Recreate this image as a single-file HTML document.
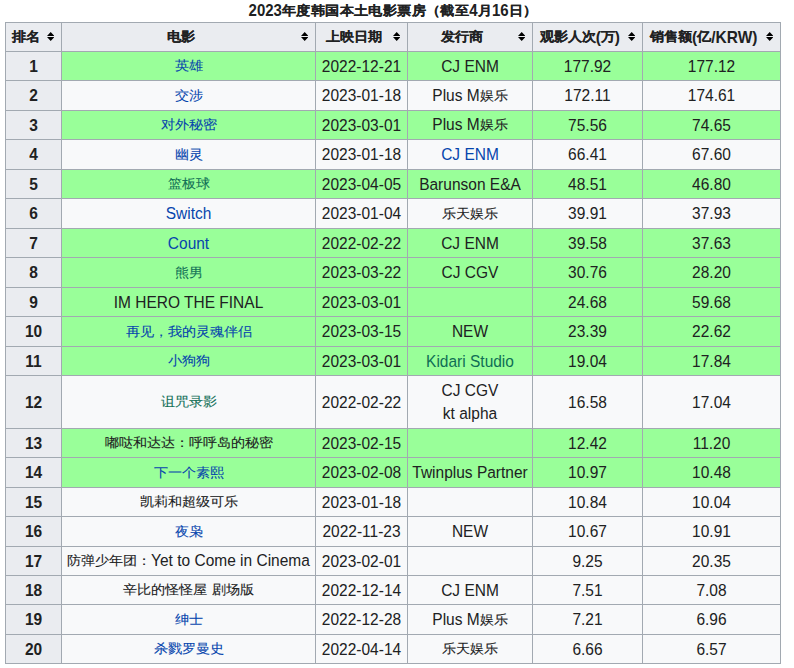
<!DOCTYPE html><html><head><meta charset="utf-8"><style>
html,body{margin:0;padding:0;background:#fff;width:794px;height:668px;overflow:hidden;}
body{position:relative;font-family:"Liberation Sans",sans-serif;font-size:15.5px;color:#202122;}
.c{position:absolute;box-sizing:border-box;border:1px solid #a2a9b1;display:flex;align-items:center;justify-content:center;text-align:center;line-height:23px;white-space:nowrap;padding-bottom:2px;}
.h{background:#eaecf0;font-weight:bold;}
.w{background:#f8f9fa;}
.g{background:#99ff99;}
.t{position:absolute;left:-4px;width:794px;top:0;height:22px;text-align:center;font-weight:bold;line-height:19px;font-size:15px;}
.t .z{font-size:14px;letter-spacing:0.4px;}
.s{position:absolute;width:7.4px;height:9px;}
.z{font-size:14px;display:inline-block;transform:scaleY(0.92);-webkit-text-stroke:0.1px currentColor;}
.l{display:inline-block;transform:scaleY(1.1);}
</style></head><body>
<div class="t"><span class="l">2023</span><span class="z">年度韩国本土电影票房（截至</span><span class="l">4</span><span class="z">月</span><span class="l">16</span><span class="z">日）</span></div>
<div class="c h" style="left:5px;top:22px;width:57px;height:30px;padding:0 21px 2px 5.6px;"><span class="z">排名</span><svg class="s" style="right:6.8px;top:9px" preserveAspectRatio="none" viewBox="0 0 8 9"><path d="M4 0L8 4H0Z M0 5H8L4 9Z" fill="#000"/></svg></div>
<div class="c h" style="left:61px;top:22px;width:255px;height:30px;padding:0 21px 2px 5.6px;"><span class="z">电影</span><svg class="s" style="right:6.8px;top:9px" preserveAspectRatio="none" viewBox="0 0 8 9"><path d="M4 0L8 4H0Z M0 5H8L4 9Z" fill="#000"/></svg></div>
<div class="c h" style="left:315px;top:22px;width:93px;height:30px;padding:0 21px 2px 5.6px;"><span class="z">上映日期</span><svg class="s" style="right:6.8px;top:9px" preserveAspectRatio="none" viewBox="0 0 8 9"><path d="M4 0L8 4H0Z M0 5H8L4 9Z" fill="#000"/></svg></div>
<div class="c h" style="left:407px;top:22px;width:126px;height:30px;padding:0 21px 2px 5.6px;"><span class="z">发行商</span><svg class="s" style="right:6.8px;top:9px" preserveAspectRatio="none" viewBox="0 0 8 9"><path d="M4 0L8 4H0Z M0 5H8L4 9Z" fill="#000"/></svg></div>
<div class="c h" style="left:532px;top:22px;width:111px;height:30px;padding:0 21px 2px 5.6px;"><span class="z">观影人次</span><span class="l">(</span><span class="z">万</span><span class="l">)</span><svg class="s" style="right:6.8px;top:9px" preserveAspectRatio="none" viewBox="0 0 8 9"><path d="M4 0L8 4H0Z M0 5H8L4 9Z" fill="#000"/></svg></div>
<div class="c h" style="left:642px;top:22px;width:139px;height:30px;padding:0 21px 2px 5.6px;"><span class="z">销售额</span><span class="l">(</span><span class="z">亿</span><span class="l">/KRW)</span><svg class="s" style="right:6.8px;top:9px" preserveAspectRatio="none" viewBox="0 0 8 9"><path d="M4 0L8 4H0Z M0 5H8L4 9Z" fill="#000"/></svg></div>
<div class="c h" style="left:5px;top:51px;width:57px;height:30px;"><span class="l">1</span></div>
<div class="c g" style="left:61px;top:51px;width:255px;height:30px;"><span style="color:#0645ad"><span class="z">英雄</span></span></div>
<div class="c g" style="left:315px;top:51px;width:93px;height:30px;"><span class="l">2022-12-21</span></div>
<div class="c g" style="left:407px;top:51px;width:126px;height:30px;"><span style="color:#202122"><span class="l">CJ ENM</span></span></div>
<div class="c g" style="left:532px;top:51px;width:111px;height:30px;"><span class="l">177.92</span></div>
<div class="c g" style="left:642px;top:51px;width:139px;height:30px;"><span class="l">177.12</span></div>
<div class="c h" style="left:5px;top:80px;width:57px;height:31px;"><span class="l">2</span></div>
<div class="c w" style="left:61px;top:80px;width:255px;height:31px;"><span style="color:#0645ad"><span class="z">交涉</span></span></div>
<div class="c w" style="left:315px;top:80px;width:93px;height:31px;"><span class="l">2023-01-18</span></div>
<div class="c w" style="left:407px;top:80px;width:126px;height:31px;"><span style="color:#202122"><span class="l">Plus M</span><span class="z">娱乐</span></span></div>
<div class="c w" style="left:532px;top:80px;width:111px;height:31px;"><span class="l">172.11</span></div>
<div class="c w" style="left:642px;top:80px;width:139px;height:31px;"><span class="l">174.61</span></div>
<div class="c h" style="left:5px;top:110px;width:57px;height:30px;"><span class="l">3</span></div>
<div class="c g" style="left:61px;top:110px;width:255px;height:30px;"><span style="color:#0645ad"><span class="z">对外秘密</span></span></div>
<div class="c g" style="left:315px;top:110px;width:93px;height:30px;"><span class="l">2023-03-01</span></div>
<div class="c g" style="left:407px;top:110px;width:126px;height:30px;"><span style="color:#202122"><span class="l">Plus M</span><span class="z">娱乐</span></span></div>
<div class="c g" style="left:532px;top:110px;width:111px;height:30px;"><span class="l">75.56</span></div>
<div class="c g" style="left:642px;top:110px;width:139px;height:30px;"><span class="l">74.65</span></div>
<div class="c h" style="left:5px;top:139px;width:57px;height:31px;"><span class="l">4</span></div>
<div class="c w" style="left:61px;top:139px;width:255px;height:31px;"><span style="color:#0645ad"><span class="z">幽灵</span></span></div>
<div class="c w" style="left:315px;top:139px;width:93px;height:31px;"><span class="l">2023-01-18</span></div>
<div class="c w" style="left:407px;top:139px;width:126px;height:31px;"><span style="color:#0645ad"><span class="l">CJ ENM</span></span></div>
<div class="c w" style="left:532px;top:139px;width:111px;height:31px;"><span class="l">66.41</span></div>
<div class="c w" style="left:642px;top:139px;width:139px;height:31px;"><span class="l">67.60</span></div>
<div class="c h" style="left:5px;top:169px;width:57px;height:30px;"><span class="l">5</span></div>
<div class="c g" style="left:61px;top:169px;width:255px;height:30px;"><span style="color:#0f6e55"><span class="z">篮板球</span></span></div>
<div class="c g" style="left:315px;top:169px;width:93px;height:30px;"><span class="l">2023-04-05</span></div>
<div class="c g" style="left:407px;top:169px;width:126px;height:30px;"><span style="color:#202122"><span class="l">Barunson E&amp;A</span></span></div>
<div class="c g" style="left:532px;top:169px;width:111px;height:30px;"><span class="l">48.51</span></div>
<div class="c g" style="left:642px;top:169px;width:139px;height:30px;"><span class="l">46.80</span></div>
<div class="c h" style="left:5px;top:198px;width:57px;height:31px;"><span class="l">6</span></div>
<div class="c w" style="left:61px;top:198px;width:255px;height:31px;"><span style="color:#0645ad"><span class="l">Switch</span></span></div>
<div class="c w" style="left:315px;top:198px;width:93px;height:31px;"><span class="l">2023-01-04</span></div>
<div class="c w" style="left:407px;top:198px;width:126px;height:31px;"><span style="color:#202122"><span class="z">乐天娱乐</span></span></div>
<div class="c w" style="left:532px;top:198px;width:111px;height:31px;"><span class="l">39.91</span></div>
<div class="c w" style="left:642px;top:198px;width:139px;height:31px;"><span class="l">37.93</span></div>
<div class="c h" style="left:5px;top:228px;width:57px;height:30px;"><span class="l">7</span></div>
<div class="c g" style="left:61px;top:228px;width:255px;height:30px;"><span style="color:#0645ad"><span class="l">Count</span></span></div>
<div class="c g" style="left:315px;top:228px;width:93px;height:30px;"><span class="l">2022-02-22</span></div>
<div class="c g" style="left:407px;top:228px;width:126px;height:30px;"><span style="color:#202122"><span class="l">CJ ENM</span></span></div>
<div class="c g" style="left:532px;top:228px;width:111px;height:30px;"><span class="l">39.58</span></div>
<div class="c g" style="left:642px;top:228px;width:139px;height:30px;"><span class="l">37.63</span></div>
<div class="c h" style="left:5px;top:257px;width:57px;height:31px;"><span class="l">8</span></div>
<div class="c g" style="left:61px;top:257px;width:255px;height:31px;"><span style="color:#0f6e55"><span class="z">熊男</span></span></div>
<div class="c g" style="left:315px;top:257px;width:93px;height:31px;"><span class="l">2023-03-22</span></div>
<div class="c g" style="left:407px;top:257px;width:126px;height:31px;"><span style="color:#202122"><span class="l">CJ CGV</span></span></div>
<div class="c g" style="left:532px;top:257px;width:111px;height:31px;"><span class="l">30.76</span></div>
<div class="c g" style="left:642px;top:257px;width:139px;height:31px;"><span class="l">28.20</span></div>
<div class="c h" style="left:5px;top:287px;width:57px;height:30px;"><span class="l">9</span></div>
<div class="c g" style="left:61px;top:287px;width:255px;height:30px;"><span style="color:#202122"><span class="l">IM HERO THE FINAL</span></span></div>
<div class="c g" style="left:315px;top:287px;width:93px;height:30px;"><span class="l">2023-03-01</span></div>
<div class="c g" style="left:407px;top:287px;width:126px;height:30px;"><span style="color:#202122"></span></div>
<div class="c g" style="left:532px;top:287px;width:111px;height:30px;"><span class="l">24.68</span></div>
<div class="c g" style="left:642px;top:287px;width:139px;height:30px;"><span class="l">59.68</span></div>
<div class="c h" style="left:5px;top:316px;width:57px;height:31px;"><span class="l">10</span></div>
<div class="c g" style="left:61px;top:316px;width:255px;height:31px;"><span style="color:#0645ad"><span class="z">再见，我的灵魂伴侣</span></span></div>
<div class="c g" style="left:315px;top:316px;width:93px;height:31px;"><span class="l">2023-03-15</span></div>
<div class="c g" style="left:407px;top:316px;width:126px;height:31px;"><span style="color:#202122"><span class="l">NEW</span></span></div>
<div class="c g" style="left:532px;top:316px;width:111px;height:31px;"><span class="l">23.39</span></div>
<div class="c g" style="left:642px;top:316px;width:139px;height:31px;"><span class="l">22.62</span></div>
<div class="c h" style="left:5px;top:346px;width:57px;height:30px;"><span class="l">11</span></div>
<div class="c g" style="left:61px;top:346px;width:255px;height:30px;"><span style="color:#0645ad"><span class="z">小狗狗</span></span></div>
<div class="c g" style="left:315px;top:346px;width:93px;height:30px;"><span class="l">2023-03-01</span></div>
<div class="c g" style="left:407px;top:346px;width:126px;height:30px;"><span style="color:#0f6e55"><span class="l">Kidari Studio</span></span></div>
<div class="c g" style="left:532px;top:346px;width:111px;height:30px;"><span class="l">19.04</span></div>
<div class="c g" style="left:642px;top:346px;width:139px;height:30px;"><span class="l">17.84</span></div>
<div class="c h" style="left:5px;top:375px;width:57px;height:54px;"><span class="l">12</span></div>
<div class="c w" style="left:61px;top:375px;width:255px;height:54px;"><span style="color:#0f6e55"><span class="z">诅咒录影</span></span></div>
<div class="c w" style="left:315px;top:375px;width:93px;height:54px;"><span class="l">2022-02-22</span></div>
<div class="c w" style="left:407px;top:375px;width:126px;height:54px;"><span style="color:#202122"><span class="l">CJ CGV</span><br><span class="l">kt alpha</span></span></div>
<div class="c w" style="left:532px;top:375px;width:111px;height:54px;"><span class="l">16.58</span></div>
<div class="c w" style="left:642px;top:375px;width:139px;height:54px;"><span class="l">17.04</span></div>
<div class="c h" style="left:5px;top:428px;width:57px;height:30px;"><span class="l">13</span></div>
<div class="c g" style="left:61px;top:428px;width:255px;height:30px;"><span style="color:#202122"><span class="z">嘟哒和达达：呼呼岛的秘密</span></span></div>
<div class="c g" style="left:315px;top:428px;width:93px;height:30px;"><span class="l">2023-02-15</span></div>
<div class="c g" style="left:407px;top:428px;width:126px;height:30px;"><span style="color:#202122"></span></div>
<div class="c g" style="left:532px;top:428px;width:111px;height:30px;"><span class="l">12.42</span></div>
<div class="c g" style="left:642px;top:428px;width:139px;height:30px;"><span class="l">11.20</span></div>
<div class="c h" style="left:5px;top:457px;width:57px;height:31px;"><span class="l">14</span></div>
<div class="c g" style="left:61px;top:457px;width:255px;height:31px;"><span style="color:#0645ad"><span class="z">下一个素熙</span></span></div>
<div class="c g" style="left:315px;top:457px;width:93px;height:31px;"><span class="l">2023-02-08</span></div>
<div class="c g" style="left:407px;top:457px;width:126px;height:31px;"><span style="color:#202122"><span class="l">Twinplus Partner</span></span></div>
<div class="c g" style="left:532px;top:457px;width:111px;height:31px;"><span class="l">10.97</span></div>
<div class="c g" style="left:642px;top:457px;width:139px;height:31px;"><span class="l">10.48</span></div>
<div class="c h" style="left:5px;top:487px;width:57px;height:30px;"><span class="l">15</span></div>
<div class="c w" style="left:61px;top:487px;width:255px;height:30px;"><span style="color:#202122"><span class="z">凯莉和超级可乐</span></span></div>
<div class="c w" style="left:315px;top:487px;width:93px;height:30px;"><span class="l">2023-01-18</span></div>
<div class="c w" style="left:407px;top:487px;width:126px;height:30px;"><span style="color:#202122"></span></div>
<div class="c w" style="left:532px;top:487px;width:111px;height:30px;"><span class="l">10.84</span></div>
<div class="c w" style="left:642px;top:487px;width:139px;height:30px;"><span class="l">10.04</span></div>
<div class="c h" style="left:5px;top:516px;width:57px;height:31px;"><span class="l">16</span></div>
<div class="c w" style="left:61px;top:516px;width:255px;height:31px;"><span style="color:#0645ad"><span class="z">夜枭</span></span></div>
<div class="c w" style="left:315px;top:516px;width:93px;height:31px;"><span class="l">2022-11-23</span></div>
<div class="c w" style="left:407px;top:516px;width:126px;height:31px;"><span style="color:#202122"><span class="l">NEW</span></span></div>
<div class="c w" style="left:532px;top:516px;width:111px;height:31px;"><span class="l">10.67</span></div>
<div class="c w" style="left:642px;top:516px;width:139px;height:31px;"><span class="l">10.91</span></div>
<div class="c h" style="left:5px;top:546px;width:57px;height:30px;"><span class="l">17</span></div>
<div class="c w" style="left:61px;top:546px;width:255px;height:30px;"><span style="color:#202122"><span class="z">防弹少年团：</span><span class="l">Yet to Come in Cinema</span></span></div>
<div class="c w" style="left:315px;top:546px;width:93px;height:30px;"><span class="l">2023-02-01</span></div>
<div class="c w" style="left:407px;top:546px;width:126px;height:30px;"><span style="color:#202122"></span></div>
<div class="c w" style="left:532px;top:546px;width:111px;height:30px;"><span class="l">9.25</span></div>
<div class="c w" style="left:642px;top:546px;width:139px;height:30px;"><span class="l">20.35</span></div>
<div class="c h" style="left:5px;top:575px;width:57px;height:30px;"><span class="l">18</span></div>
<div class="c w" style="left:61px;top:575px;width:255px;height:30px;"><span style="color:#202122"><span class="z">辛比的怪怪屋</span> <span class="z">剧场版</span></span></div>
<div class="c w" style="left:315px;top:575px;width:93px;height:30px;"><span class="l">2022-12-14</span></div>
<div class="c w" style="left:407px;top:575px;width:126px;height:30px;"><span style="color:#202122"><span class="l">CJ ENM</span></span></div>
<div class="c w" style="left:532px;top:575px;width:111px;height:30px;"><span class="l">7.51</span></div>
<div class="c w" style="left:642px;top:575px;width:139px;height:30px;"><span class="l">7.08</span></div>
<div class="c h" style="left:5px;top:604px;width:57px;height:31px;"><span class="l">19</span></div>
<div class="c w" style="left:61px;top:604px;width:255px;height:31px;"><span style="color:#0645ad"><span class="z">绅士</span></span></div>
<div class="c w" style="left:315px;top:604px;width:93px;height:31px;"><span class="l">2022-12-28</span></div>
<div class="c w" style="left:407px;top:604px;width:126px;height:31px;"><span style="color:#202122"><span class="l">Plus M</span><span class="z">娱乐</span></span></div>
<div class="c w" style="left:532px;top:604px;width:111px;height:31px;"><span class="l">7.21</span></div>
<div class="c w" style="left:642px;top:604px;width:139px;height:31px;"><span class="l">6.96</span></div>
<div class="c h" style="left:5px;top:634px;width:57px;height:30px;"><span class="l">20</span></div>
<div class="c w" style="left:61px;top:634px;width:255px;height:30px;"><span style="color:#0645ad"><span class="z">杀戮罗曼史</span></span></div>
<div class="c w" style="left:315px;top:634px;width:93px;height:30px;"><span class="l">2022-04-14</span></div>
<div class="c w" style="left:407px;top:634px;width:126px;height:30px;"><span style="color:#202122"><span class="z">乐天娱乐</span></span></div>
<div class="c w" style="left:532px;top:634px;width:111px;height:30px;"><span class="l">6.66</span></div>
<div class="c w" style="left:642px;top:634px;width:139px;height:30px;"><span class="l">6.57</span></div>
</body></html>
